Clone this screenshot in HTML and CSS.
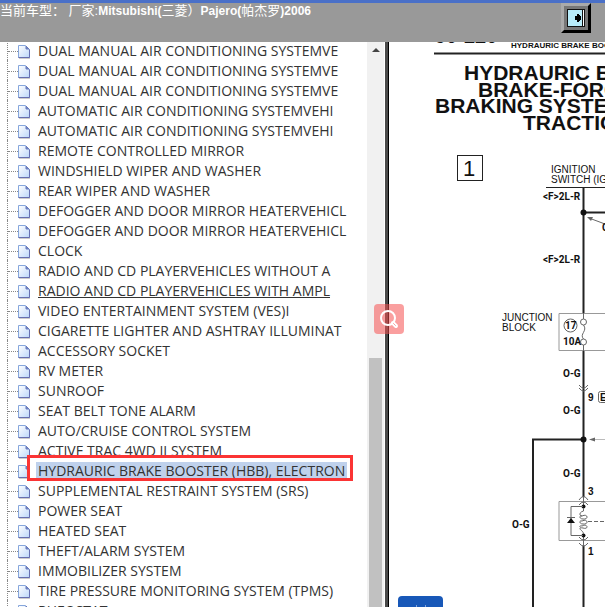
FILE: index.html
```html
<!DOCTYPE html>
<html lang="zh-CN">
<head>
  <meta charset="UTF-8" />
  <meta name="viewport" content="width=device-width, initial-scale=1.0"/>
  <title>Pajero 2006</title>
  <link rel="stylesheet" href="styles.css">
</head>
<body>
  <header class="topbar">
    <p class="model">当前车型： 厂家:<b>Mitsubishi(</b>三菱）<b>Pajero(</b>帕杰罗<b>)2006</b></p>
    <button class="exit-btn" aria-label="Exit">
      <svg width="18" height="18" viewBox="0 0 18 18">
        <rect x="0" y="0" width="18" height="18" fill="#111"/>
        <rect x="1" y="1" width="14" height="16" fill="#b8ecfa"/>
        <rect x="16" y="1" width="1" height="16" fill="#fff"/>
        <path d="M8 7h2V5h2v1h1v1h1v4h-1v1h-1v1h-2v-2H8z" fill="#000"/>
      </svg>
    </button>
  </header>

  <main class="content">
    <nav class="sidebar">
      <ul id="tree" class="tree"></ul>
      <div class="scrollbar">
        <span class="scroll-up"></span>
        <span class="scroll-thumb"></span>
      </div>
    </nav>

    <section class="sheet">
      <svg class="diagram" width="100%" height="100%">
        <defs>
          <linearGradient id="paper" x1="0" y1="0" x2="1" y2="1">
            <stop offset="0" stop-color="#fff"/>
            <stop offset="1" stop-color="#bcd8fa"/>
          </linearGradient>
        </defs>
        <g transform="translate(-389 -42)">
          <!-- page header -->
          <text class="page-no" x="435" y="43">90-220</text>
          <text class="running" x="511" y="48">HYDRAURIC BRAKE BOO</text>
          <path class="rule" d="M434 53.500H2000"/>

          <text class="title" x="464" y="80">HYDRAURIC B</text>
          <text class="title" x="478" y="97">BRAKE-FORC</text>
          <text class="title" x="435" y="113">BRAKING SYSTE</text>
          <text class="title" x="523" y="130">TRACTIO</text>

          <rect class="box" x="457.500" y="155.500" width="25" height="25"/>
          <text class="sheet-no" x="463" y="176">1</text>

          <!-- ignition feed -->
          <text class="label" x="551" y="173">IGNITION</text>
          <text class="label" x="551" y="183">SWITCH (IG</text>
          <path class="thin" d="M546 187.500H2000"/>
          <path class="wire" d="M583.500 187V313M583.500 351V497M583.500 546V2000M583.500 212.500H2000"/>
          <circle cx="583.500" cy="212.500" r="3"/>
          <path class="hair" d="M589 218L605 224"/>
          <path d="M587 217l6 0-2 4z" fill="#666"/>
          <text class="code" x="543" y="200">&lt;F&gt;2L-R</text>
          <text class="code" x="543" y="263">&lt;F&gt;2L-R</text>
          <text class="code" x="602" y="231">C</text>

          <!-- junction block -->
          <text class="label" x="502" y="321">JUNCTION</text>
          <text class="label" x="502" y="331">BLOCK</text>
          <path class="frame" d="M2000 313.500H559V350.500H2000"/>
          <circle class="hair" cx="570.500" cy="325.500" r="6.500"/>
          <text class="code" x="565" y="329">17</text>
          <text class="code" x="563" y="345">10A</text>
          <path class="hair" d="M583.500 313V319M583.500 325C588 331 579 334 583.500 339M583.500 345V351"/>
          <circle class="hair" cx="583.500" cy="322" r="3"/>
          <circle class="hair" cx="583.500" cy="342" r="3"/>
          <text class="code" x="563" y="377">O-G</text>
          <path class="hair" d="M579 385Q583.500 391 588 385M579 388Q583.500 394 588 388"/>
          <text class="num" x="588" y="401">9</text>
          <rect class="hair" x="598.500" y="391.500" width="20" height="11" rx="2"/>
          <text class="num" x="600" y="401">E</text>
          <text class="code" x="563" y="414">O-G</text>

          <!-- branch -->
          <path class="wire" d="M533 2000V439.500H583"/>
          <circle cx="583.500" cy="439.500" r="3"/>
          <path class="faint" d="M593 439.500H2000"/>
          <path d="M589 439.500l6-2v4z" fill="#666"/>
          <text class="code" x="563" y="477">O-G</text>
          <text class="code" x="512" y="528">O-G</text>

          <!-- relay -->
          <text class="num" x="588" y="495">3</text>
          <text class="num" x="588" y="555">1</text>
          <path class="frame" d="M2000 501.500H559V540.500H2000"/>
          <path class="hair" d="M579 500Q583.500 493 588 500M579 505Q583.500 499 588 505M579 537Q583.500 543 588 537M579 543Q583.500 549 588 543M583.500 497V506M583.500 536V546"/>
          <circle cx="583.500" cy="506.500" r="2"/>
          <circle cx="583.500" cy="535.500" r="2"/>
          <path class="hair" d="M583 506.500H571V535.500H583M567 517.500H575"/>
          <path d="M571 518l4 5h-8z"/>
          <path class="hair" d="M583.500 508V511C579 512 579 516 582 516M582 516C588 513 589 520 583 519C579 519 579 515 582 516M582 521C588 518 589 525 583 524C579 524 579 520 582 521M582 526C588 523 589 530 583 528C579 528 579 525 582 526M580 528C580 531 583 530 583.500 534"/>
          <path class="hair" stroke-dasharray="4 2" d="M588 521.500H2000"/>
        </g>
      </svg>
      <button class="blue-btn" aria-label="Toggle">
        <svg width="12" height="2" viewBox="0 0 12 2"><path d="M1.500 0v2M10.500 0v2" stroke="#7fa3dc"/></svg>
      </button>
    </section>
    <button class="search-btn" aria-label="Search">
      <svg width="20" height="20" viewBox="0 0 20 20" fill="none" stroke="#fff">
        <circle cx="9" cy="9" r="7" stroke-width="2"/>
        <path d="M14 14l3 3" stroke-width="4" stroke-linecap="round"/>
        <path d="M14.500 14.500l2 2" stroke="#f9a1a1" stroke-linecap="round"/>
      </svg>
    </button>
  </main>

  <script src="tree.js"></script>
</body>
</html>
```

FILE: styles.css
```css
* {
  margin: 0;
  padding: 0;
  box-sizing: border-box;
}

body {
  display: flex;
  flex-direction: column;
  height: 100vh;
  overflow: hidden;
  background: #fff;
  font-family: "Open Sans", "Noto Sans CJK SC", sans-serif;
  color: #333;
}

/* top bar */
.topbar {
  display: flex;
  justify-content: space-between;
  align-items: flex-start;
  flex-shrink: 0;
  height: 42px;
  padding-right: 14px;
  border-top: 3px solid #4a70c8;
  background: #999;
}

.model {
  color: #fff;
  font-family: "Liberation Sans", "Noto Sans CJK SC", sans-serif;
  font-size: 13px;
  line-height: 16px;
  white-space: nowrap;
}

.model b {
  font-size: 12px;
}

.exit-btn {
  display: flex;
  align-items: center;
  justify-content: center;
  width: 30px;
  height: 30px;
  border: 3px solid;
  border-color: #aaa #000 #000 #aaa;
  background: #777;
}

.content {
  position: relative;
  display: flex;
  flex: 1;
  min-height: 0;
}

/* tree */
.sidebar {
  display: flex;
  flex-shrink: 0;
  width: 389px;
  overflow: hidden;
  border-right: 1px solid #000;
  box-shadow: inset -3px 0 #4a4a4a;
}

.tree {
  flex: 1;
  margin-top: -2px;
  padding-left: 7px;
  list-style: none;
}

.tree li {
  display: flex;
  align-items: center;
  height: 20px;
  border-left: 1px dotted #888;
}

.tree li::before {
  content: "";
  width: 10px;
  margin-top: 2px;
  border-top: 1px dotted #888;
}

.tree svg {
  flex-shrink: 0;
  margin-top: 4px;
}

.tree a {
  margin-left: 6px;
  padding: 0 2px;
  color: #333;
  font-size: 14px;
  line-height: 17px;
  white-space: nowrap;
  text-decoration: none;
}

.tree .hover a {
  text-decoration: underline;
}

.tree .current {
  position: relative;
}

.tree .current a {
  background: #bfd1ec;
}

.tree .current::after {
  content: "";
  position: absolute;
  left: 19px;
  top: -5px;
  width: 320px;
  height: 20px;
  border: 3px solid #fb3434;
}

.scrollbar {
  display: flex;
  flex-direction: column;
  justify-content: space-between;
  align-items: center;
  width: 17px;
  margin-right: 4px;
  background: #f1f1f1;
}

.scroll-up {
  margin-top: 6px;
  border: 4px solid transparent;
  border-top-width: 0;
  border-bottom-color: #444;
}

.scroll-thumb {
  width: 13px;
  height: 44%;
  background: #c1c1c1;
}

/* wiring diagram */
.sheet {
  position: relative;
  flex: 1;
  min-width: 0;
  overflow: hidden;
}

.diagram {
  display: block;
  fill: #111;
  font-family: "Liberation Sans", Arial, sans-serif;
}

.page-no {
  font-size: 20px;
  font-weight: bold;
}

.running {
  font-size: 8px;
  font-weight: bold;
}

.title {
  font-size: 21px;
  font-weight: bold;
}

.sheet-no {
  font-size: 22px;
}

.label {
  font-size: 10px;
}

.code {
  font-family: Roboto, sans-serif;
  font-size: 10px;
  font-weight: bold;
}

.num {
  font-size: 10px;
  font-weight: bold;
}

.rule,
.wire,
.thin,
.box,
.frame,
.faint,
.hair {
  fill: none;
  stroke: #222;
}

.rule,
.wire {
  stroke-width: 2px;
}

.frame {
  stroke: #999;
}

.hair {
  stroke: #666;
}

.faint {
  stroke: #bbb;
}

/* floating buttons */
.search-btn {
  position: absolute;
  left: 374px;
  top: 262px;
  display: flex;
  align-items: center;
  justify-content: center;
  width: 30px;
  height: 30px;
  border: none;
  border-radius: 4px;
  background: rgba(245, 80, 80, 0.55);
}

.blue-btn {
  position: absolute;
  left: 9px;
  bottom: 0;
  display: flex;
  align-items: flex-end;
  justify-content: center;
  width: 45px;
  height: 11px;
  border: none;
  border-radius: 4px 4px 0 0;
  background: #1858b8;
  overflow: hidden;
}
```

FILE: tree.js
```js
const items = [
  "DUAL MANUAL AIR CONDITIONING SYSTEMVE",
  "DUAL MANUAL AIR CONDITIONING SYSTEMVE",
  "DUAL MANUAL AIR CONDITIONING SYSTEMVE",
  "AUTOMATIC AIR CONDITIONING SYSTEMVEHI",
  "AUTOMATIC AIR CONDITIONING SYSTEMVEHI",
  "REMOTE CONTROLLED MIRROR",
  "WINDSHIELD WIPER AND WASHER",
  "REAR WIPER AND WASHER",
  "DEFOGGER AND DOOR MIRROR HEATERVEHICL",
  "DEFOGGER AND DOOR MIRROR HEATERVEHICL",
  "CLOCK",
  "RADIO AND CD PLAYERVEHICLES WITHOUT A",
  "RADIO AND CD PLAYERVEHICLES WITH AMPL",
  "VIDEO ENTERTAINMENT SYSTEM (VES)I",
  "CIGARETTE LIGHTER AND ASHTRAY ILLUMINAT",
  "ACCESSORY SOCKET",
  "RV METER",
  "SUNROOF",
  "SEAT BELT TONE ALARM",
  "AUTO/CRUISE CONTROL SYSTEM",
  "ACTIVE TRAC 4WD II SYSTEM",
  "HYDRAURIC BRAKE BOOSTER (HBB), ELECTRON",
  "SUPPLEMENTAL RESTRAINT SYSTEM (SRS)",
  "POWER SEAT",
  "HEATED SEAT",
  "THEFT/ALARM SYSTEM",
  "IMMOBILIZER SYSTEM",
  "TIRE PRESSURE MONITORING SYSTEM (TPMS)",
  "RHEOSTAT"
];

const fileIcon = `
  <svg width="12" height="14" viewBox="0 0 12 14">
    <path d="M.5.500h7l4 4v8H.500z" fill="url(#paper)" stroke="#86a6dc"/>
    <path d="M11.500 4.500v8H.500" fill="none" stroke="#6670b0"/>
    <path d="M8 1v3h3z" fill="#7288c8" stroke="#6a7cbc"/>
    <path d="M1 13.500h11" stroke="#ccc"/>
  </svg>`;

const tree = document.getElementById("tree");

items.forEach((text, i) => {
  const li = document.createElement("li");
  if (i === 12) li.className = "hover";
  if (i === 21) li.className = "current";
  li.innerHTML = fileIcon + '<a href="#"></a>';
  li.querySelector("a").textContent = text;
  tree.appendChild(li);
});
```
